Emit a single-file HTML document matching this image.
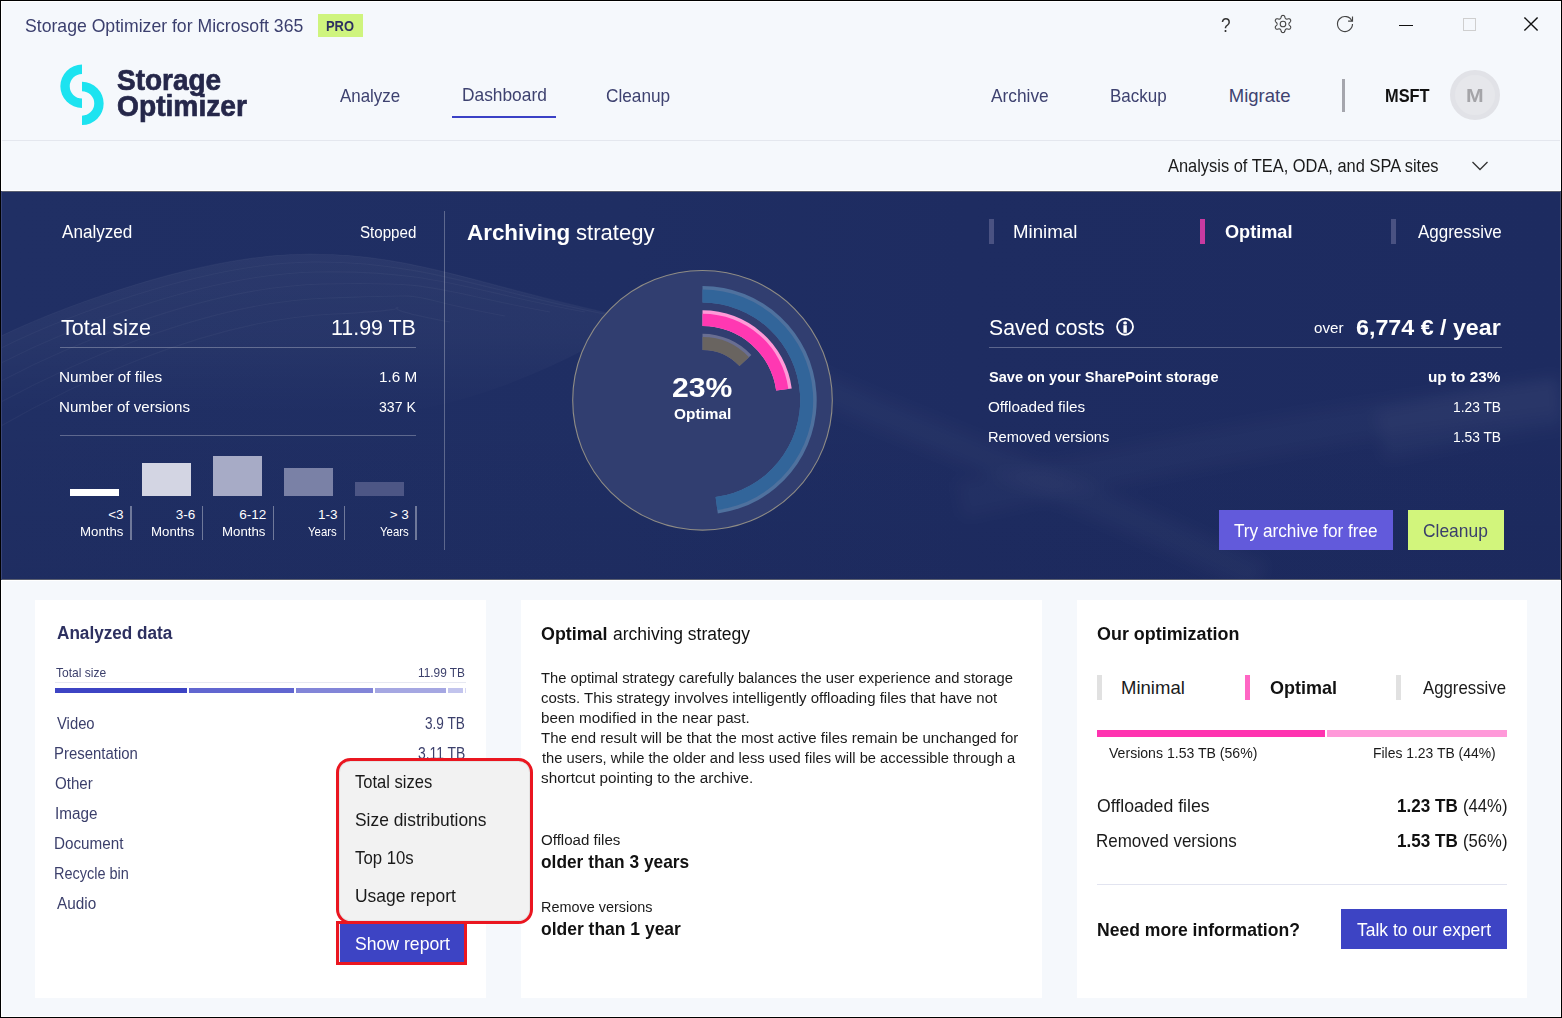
<!DOCTYPE html>
<html lang="en"><head><meta charset="utf-8"><title>Storage Optimizer for Microsoft 365</title>
<style>
*{margin:0;padding:0;}
html,body{width:1562px;height:1018px;overflow:hidden;background:#f5f8fc;}
body{font-family:"Liberation Sans",sans-serif;}
#app{position:relative;width:1562px;height:1018px;overflow:hidden;background:#f5f8fc;}
#app div,#app svg.a,#app button,.t{position:absolute;}
#app .titlebar,#app header,#app .subbar,#app section,#app nav,#app main{position:static;}
button{border:0;display:block;}
.t{white-space:nowrap;line-height:1;display:block;font-weight:400;text-decoration:none;}
.herobg{background:#1f2e63;box-sizing:border-box;border-top:1px solid #fff;border-bottom:1px solid #fff;box-shadow:inset 0 1px 0 #5a5f70,inset 0 -1px 0 #5a5f70;}
.frame{left:0;top:0;width:1562px;height:1018px;box-sizing:border-box;border:1px solid #000;box-shadow:inset 0 0 0 1px #fff;pointer-events:none;z-index:9;}
</style></head>
<body><div id="app">
<div class="titlebar"><span class="t" style="font-size:18.5px;top:17.00px;color:#3b3f6e;left:24.95px;transform:scaleX(0.9530);transform-origin:0 0;">Storage Optimizer for Microsoft 365</span><div style="left:318px;top:14px;width:45px;height:23px;background:#cff47e;"></div><span class="t" style="font-size:14px;top:19.00px;color:#2d3060;font-weight:700;left:326.19px;transform:scaleX(0.9218);transform-origin:0 0;">PRO</span><span class="t" style="font-size:19.5px;top:16.00px;color:#333;left:1220.76px;transform:scaleX(0.8821);transform-origin:0 0;">?</span><svg class="a" style="left:1273px;top:14px" width="20" height="20" viewBox="0 0 20 20"><g fill="none" stroke="#444" stroke-width="1.1" stroke-linejoin="round"><circle cx="10" cy="10" r="2.8"/><path d="M10.00 1.40L10.30 1.42L10.60 1.49L10.88 1.60L11.16 1.77L11.41 2.00L11.63 2.32L11.81 2.74L11.93 3.26L12.05 3.68L12.18 4.01L12.32 4.26L12.46 4.47L12.62 4.64L12.78 4.78L12.95 4.89L13.14 4.98L13.34 5.05L13.56 5.10L13.81 5.12L14.10 5.11L14.45 5.06L14.87 4.95L15.39 4.80L15.84 4.74L16.22 4.78L16.55 4.88L16.83 5.04L17.07 5.23L17.28 5.45L17.45 5.70L17.58 5.97L17.67 6.26L17.71 6.57L17.71 6.89L17.63 7.22L17.47 7.57L17.20 7.94L16.81 8.30L16.50 8.62L16.28 8.89L16.13 9.14L16.02 9.37L15.95 9.58L15.91 9.79L15.90 10.00L15.91 10.21L15.95 10.42L16.02 10.63L16.13 10.86L16.28 11.11L16.50 11.38L16.81 11.70L17.20 12.06L17.47 12.43L17.63 12.78L17.71 13.11L17.71 13.43L17.67 13.74L17.58 14.03L17.45 14.30L17.28 14.55L17.07 14.77L16.83 14.96L16.55 15.12L16.22 15.22L15.84 15.26L15.39 15.20L14.87 15.05L14.45 14.94L14.10 14.89L13.81 14.88L13.56 14.90L13.34 14.95L13.14 15.02L12.95 15.11L12.78 15.22L12.62 15.36L12.46 15.53L12.32 15.74L12.18 15.99L12.05 16.32L11.93 16.74L11.81 17.26L11.63 17.68L11.41 18.00L11.16 18.23L10.88 18.40L10.60 18.51L10.30 18.58L10.00 18.60L9.70 18.58L9.40 18.51L9.12 18.40L8.84 18.23L8.59 18.00L8.37 17.68L8.19 17.26L8.07 16.74L7.95 16.32L7.82 15.99L7.68 15.74L7.54 15.53L7.38 15.36L7.22 15.22L7.05 15.11L6.86 15.02L6.66 14.95L6.44 14.90L6.19 14.88L5.90 14.89L5.55 14.94L5.13 15.05L4.61 15.20L4.16 15.26L3.78 15.22L3.45 15.12L3.17 14.96L2.93 14.77L2.72 14.55L2.55 14.30L2.42 14.03L2.33 13.74L2.29 13.43L2.29 13.11L2.37 12.78L2.53 12.43L2.80 12.06L3.19 11.70L3.50 11.38L3.72 11.11L3.87 10.86L3.98 10.63L4.05 10.42L4.09 10.21L4.10 10.00L4.09 9.79L4.05 9.58L3.98 9.37L3.87 9.14L3.72 8.89L3.50 8.62L3.19 8.30L2.80 7.94L2.53 7.57L2.37 7.22L2.29 6.89L2.29 6.57L2.33 6.26L2.42 5.97L2.55 5.70L2.72 5.45L2.93 5.23L3.17 5.04L3.45 4.88L3.78 4.78L4.16 4.74L4.61 4.80L5.13 4.95L5.55 5.06L5.90 5.11L6.19 5.12L6.44 5.10L6.66 5.05L6.86 4.98L7.05 4.89L7.22 4.78L7.38 4.64L7.54 4.47L7.68 4.26L7.82 4.01L7.95 3.68L8.07 3.26L8.19 2.74L8.37 2.32L8.59 2.00L8.84 1.77L9.12 1.60L9.40 1.49L9.70 1.42Z"/></g></svg><svg class="a" style="left:1335px;top:14px" width="20" height="20" viewBox="1335 14 20 20"><g fill="none" stroke="#444" stroke-width="1.15"><path d="M1352.500 24.100A7.500 7.500 0 1 1 1351.900 21.100"/><path d="M1352.500 16.500V21.100H1348.100"/></g></svg><div style="left:1399px;top:25px;width:14px;height:1px;background:#111;"></div><div style="left:1463px;top:18px;width:13px;height:13px;background:transparent;border:1px solid #cfcfcf;box-sizing:border-box;"></div><svg class="a" style="left:1522px;top:16px" width="18" height="18" viewBox="0 0 18 18"><path d="M2.400 1.400L15.600 14.600M15.600 1.400L2.400 14.600" stroke="#111" stroke-width="1.45" fill="none"/></svg></div>
<header><svg class="a" style="left:58px;top:62px" width="50" height="66" viewBox="58 62 50 66"><path d="M82 64.600A21.650 21.650 0 0 0 82 107.900V98.500A12.250 12.250 0 0 1 82 74.000Z" fill="#1de3f0"/><path d="M82 81.800A21.650 21.650 0 0 1 82 125.100V115.700A12.250 12.250 0 0 0 82 91.200Z" fill="#1de3f0"/></svg><span class="t" style="font-size:29.5px;top:65.00px;color:#25274a;font-weight:700;left:117.16px;transform:scaleX(0.9481);transform-origin:0 0;-webkit-text-stroke:0.7px #25274a;">Storage</span><span class="t" style="font-size:29.5px;top:91.00px;color:#25274a;font-weight:700;left:117.02px;transform:scaleX(0.9554);transform-origin:0 0;-webkit-text-stroke:0.7px #25274a;">Optimizer</span><nav><a class="t" style="font-size:18.5px;top:87.00px;color:#3e4270;left:340.40px;transform:scaleX(0.9145);transform-origin:0 0;">Analyze</a><a class="t" style="font-size:18.5px;top:86.00px;color:#3e4270;left:461.65px;transform:scaleX(0.9373);transform-origin:0 0;">Dashboard</a><div style="left:452px;top:116px;width:104px;height:2px;background:#3a41c6;"></div><a class="t" style="font-size:18.5px;top:87.00px;color:#3e4270;left:606.49px;transform:scaleX(0.9317);transform-origin:0 0;">Cleanup</a><a class="t" style="font-size:18.5px;top:87.00px;color:#3e4270;left:990.50px;transform:scaleX(0.9354);transform-origin:0 0;">Archive</a><a class="t" style="font-size:18.5px;top:87.00px;color:#3e4270;left:1110.47px;transform:scaleX(0.9192);transform-origin:0 0;">Backup</a><a class="t" style="font-size:18.5px;top:87.00px;color:#3e4270;left:1228.76px;">Migrate</a></nav><div style="left:1342px;top:79px;width:3px;height:33px;background:#a5a6ad;"></div><span class="t" style="font-size:18.5px;top:87.00px;color:#111;font-weight:700;left:1384.68px;transform:scaleX(0.8847);transform-origin:0 0;">MSFT</span><div style="left:1450px;top:70px;width:50px;height:50px;background:#e6e7eb;border-radius:50%;border:5px solid #e1e2e7;box-sizing:border-box;"></div><span class="t" style="font-size:18.5px;top:87.00px;color:#a4a4a8;font-weight:700;left:1466.48px;transform:scaleX(1.1431);transform-origin:0 0;">M</span><div style="left:1px;top:140px;width:1560px;height:1px;background:#e4e7ee;"></div></header>
<div class="subbar"><span class="t" style="font-size:18.5px;top:157.00px;color:#1a1a1a;left:1168.00px;transform:scaleX(0.8878);transform-origin:0 0;">Analysis of TEA, ODA, and SPA sites</span><svg class="a" style="left:1469px;top:158px" width="22" height="14" viewBox="0 0 22 14"><path d="M3.500 4L11 11.500L18.500 4" stroke="#333" stroke-width="1.3" fill="none"/></svg></div>
<section class="hero"><div class="herobg" style="left:1px;top:190px;width:1560px;height:391px;"></div><svg class="a" style="left:1px;top:192px" width="1560" height="387" viewBox="1 192 1560 387" preserveAspectRatio="none"><defs><linearGradient id="hg" x1="0" x2="1" y1="0" y2="0"><stop offset="0" stop-color="#202f64"/><stop offset=".4" stop-color="#1f2e63"/><stop offset=".62" stop-color="#1e2c61"/><stop offset="1" stop-color="#1d2b60"/></linearGradient><linearGradient id="vg" x1="0" x2="0" y1="0" y2="1"><stop offset="0" stop-color="#000828" stop-opacity="0"/><stop offset=".55" stop-color="#000828" stop-opacity="0"/><stop offset="1" stop-color="#000828" stop-opacity=".05"/></linearGradient><linearGradient id="wf" gradientUnits="userSpaceOnUse" x1="0" x2="0" y1="256" y2="415"><stop offset="0" stop-color="#fff" stop-opacity=".05"/><stop offset=".5" stop-color="#fff" stop-opacity=".035"/><stop offset="1" stop-color="#fff" stop-opacity="0"/></linearGradient><filter id="b3" x="-5%" y="-20%" width="110%" height="140%"><feGaussianBlur stdDeviation="7"/></filter></defs><rect x="1" y="192" width="1560" height="387" fill="url(#hg)"/><rect x="1" y="192" width="1560" height="387" fill="url(#vg)"/><path d="M1 336C60 308 200 254 310 254S490 290 640 320C600 340 540 380 440 405S120 440 1 470Z" fill="url(#wf)"/><g fill="none" stroke="#fff" stroke-opacity=".035" stroke-width="1.1"><path d="M1 336C60 308 200 254 310 254S490 290 640 320"/><path d="M1 348C60 319 200 263 313 262S495 294 615 316"/><path d="M1 363C60 333 200 274 317 272S465 290 585 312"/><path d="M1 381C60 350 200 287 322 284S430 290 550 312"/><path d="M1 402C60 370 200 302 328 298S385 294 505 316"/><path d="M1 426C60 392 200 320 334 314S330 300 450 322"/></g><g filter="url(#b3)" fill="none" stroke="#fff"><path d="M640 312C720 340 790 375 860 405S1100 500 1260 578" stroke-opacity=".028" stroke-width="30"/><path d="M960 500C1100 470 1300 425 1561 395" stroke-opacity=".024" stroke-width="36"/><path d="M1380 435C1450 420 1500 410 1561 402" stroke-opacity=".03" stroke-width="50"/></g></svg><span class="t" style="font-size:18.5px;top:223.00px;color:#fff;left:61.70px;transform:scaleX(0.9245);transform-origin:0 0;">Analyzed</span><span class="t" style="font-size:16px;top:225.00px;color:#fff;left:360.33px;transform:scaleX(0.9448);transform-origin:0 0;">Stopped</span><span class="t" style="font-size:22.5px;top:317.00px;color:#fff;left:60.86px;transform:scaleX(0.9586);transform-origin:0 0;">Total size</span><span class="t" style="font-size:22.5px;top:317.00px;color:#fff;left:331.46px;transform:scaleX(0.9509);transform-origin:0 0;">11.99 TB</span><div style="left:60px;top:347px;width:356px;height:1px;background:rgba(255,255,255,.28);"></div><span class="t" style="font-size:15.5px;top:369.00px;color:#fff;left:59.30px;transform:scaleX(0.9889);transform-origin:0 0;">Number of files</span><span class="t" style="font-size:15.5px;top:369.00px;color:#fff;left:378.65px;transform:scaleX(0.9850);transform-origin:0 0;">1.6 M</span><span class="t" style="font-size:15.5px;top:399.00px;color:#fff;left:59.32px;transform:scaleX(0.9745);transform-origin:0 0;">Number of versions</span><span class="t" style="font-size:15.5px;top:399.00px;color:#fff;left:379.16px;transform:scaleX(0.9083);transform-origin:0 0;">337 K</span><div style="left:60px;top:435px;width:356px;height:1px;background:rgba(255,255,255,.28);"></div><div style="left:70px;top:489px;width:49px;height:7px;background:#ffffff;"></div><div style="left:142px;top:463px;width:49px;height:33px;background:#d3d5e3;"></div><div style="left:213px;top:456px;width:49px;height:40px;background:#a7abc6;"></div><div style="left:284px;top:468px;width:49px;height:28px;background:#7a81a6;"></div><div style="left:355px;top:482px;width:49px;height:14px;background:#4d5685;"></div><span class="t" style="font-size:13.5px;top:508.00px;color:#fff;left:108.16px;">&lt;3</span><span class="t" style="font-size:13.5px;top:525.00px;color:#fff;left:79.56px;transform:scaleX(0.9814);transform-origin:0 0;">Months</span><div style="left:130.2px;top:506px;width:1.5px;height:34px;background:rgba(255,255,255,.36);"></div><span class="t" style="font-size:13.5px;top:508.00px;color:#fff;left:175.64px;">3-6</span><span class="t" style="font-size:13.5px;top:525.00px;color:#fff;left:151.16px;transform:scaleX(0.9814);transform-origin:0 0;">Months</span><div style="left:201.7px;top:506px;width:1.5px;height:34px;background:rgba(255,255,255,.36);"></div><span class="t" style="font-size:13.5px;top:508.00px;color:#fff;left:239.33px;">6-12</span><span class="t" style="font-size:13.5px;top:525.00px;color:#fff;left:222.36px;transform:scaleX(0.9814);transform-origin:0 0;">Months</span><div style="left:272.8px;top:506px;width:1.5px;height:34px;background:rgba(255,255,255,.36);"></div><span class="t" style="font-size:13.5px;top:508.00px;color:#fff;left:318.04px;">1-3</span><span class="t" style="font-size:13.5px;top:525.00px;color:#fff;left:308.22px;transform:scaleX(0.8445);transform-origin:0 0;">Years</span><div style="left:343.8px;top:506px;width:1.5px;height:34px;background:rgba(255,255,255,.36);"></div><span class="t" style="font-size:13.5px;top:508.00px;color:#fff;left:389.70px;">&gt; 3</span><span class="t" style="font-size:13.5px;top:525.00px;color:#fff;left:379.52px;transform:scaleX(0.8445);transform-origin:0 0;">Years</span><div style="left:415px;top:506px;width:1.5px;height:34px;background:rgba(255,255,255,.36);"></div><div style="left:444px;top:211px;width:1px;height:339px;background:rgba(255,255,255,.28);"></div><span class="t" style="font-size:22.5px;top:222.00px;color:#fff;font-weight:700;left:467.15px;transform:scaleX(0.9953);transform-origin:0 0;">Archiving</span><span class="t" style="font-size:22.5px;top:222.00px;color:#fff;left:576.15px;transform:scaleX(0.9814);transform-origin:0 0;">strategy</span><svg class="a" style="left:560px;top:258px" width="284" height="284" viewBox="560 258 284 284"><circle cx="702.5" cy="400.3" r="129.8" fill="#313e70" stroke="#8f8c85" stroke-width="1.1"/><path d="M702.50 286.10A114.2 114.2 0 0 1 717.80 513.47L715.59 497.12A97.7 97.7 0 0 0 702.50 302.60Z" fill="#4f719e"/><path d="M702.50 289.60A110.7 110.7 0 0 1 717.33 510.00L715.59 497.12A97.7 97.7 0 0 0 702.50 302.60Z" fill="#32659a"/><path d="M702.50 310.30A90 90 0 0 1 791.73 388.55L776.16 390.60A74.3 74.3 0 0 0 702.50 326.00Z" fill="#ff9ad8"/><path d="M702.50 313.70A86.6 86.6 0 0 1 788.36 389.00L776.16 390.60A74.3 74.3 0 0 0 702.50 326.00Z" fill="#ff38b2"/><path d="M702.50 333.70A66.6 66.6 0 0 1 751.37 355.05L739.48 366.06A50.4 50.4 0 0 0 702.50 349.90Z" fill="#696e92"/><path d="M702.50 336.90A63.4 63.4 0 0 1 749.02 357.22L739.48 366.06A50.4 50.4 0 0 0 702.50 349.90Z" fill="#696460"/></svg><span class="t" style="font-size:28px;top:374.00px;color:#fff;font-weight:700;left:671.76px;transform:scaleX(1.0772);transform-origin:0 0;">23%</span><span class="t" style="font-size:15px;top:406.00px;color:#fff;font-weight:700;left:673.72px;transform:scaleX(1.0278);transform-origin:0 0;">Optimal</span><div style="left:989px;top:219px;width:5px;height:25px;background:#4a5282;"></div><span class="t" style="font-size:18.5px;top:223.00px;color:#fff;left:1012.94px;transform:scaleX(1.0088);transform-origin:0 0;">Minimal</span><div style="left:1200.4px;top:219px;width:5.0px;height:25px;background:#c83aa0;"></div><span class="t" style="font-size:18.5px;top:223.00px;color:#fff;font-weight:700;left:1224.83px;transform:scaleX(0.9792);transform-origin:0 0;">Optimal</span><div style="left:1391px;top:219px;width:5px;height:25px;background:#4a5282;"></div><span class="t" style="font-size:18.5px;top:223.00px;color:#fff;left:1417.60px;transform:scaleX(0.9155);transform-origin:0 0;">Aggressive</span><span class="t" style="font-size:22.5px;top:317.00px;color:#fff;left:989.14px;transform:scaleX(0.9442);transform-origin:0 0;">Saved costs</span><svg class="a" style="left:1115px;top:317px" width="20" height="20" viewBox="1115 317 20 20"><circle cx="1125.050" cy="326.750" r="8" fill="none" stroke="#fff" stroke-width="1.8"/><rect x="1123.400" y="325.200" width="3.400" height="7.600" fill="#fff"/><ellipse cx="1125.100" cy="322.900" rx="1.900" ry="1.700" fill="#fff"/></svg><span class="t" style="font-size:15.5px;top:320.00px;color:#fff;left:1313.53px;transform:scaleX(0.9800);transform-origin:0 0;">over</span><span class="t" style="font-size:22.5px;top:317.00px;color:#fff;font-weight:700;left:1356.27px;transform:scaleX(1.0331);transform-origin:0 0;">6,774 € / year</span><div style="left:989px;top:347px;width:513px;height:1px;background:rgba(255,255,255,.28);"></div><span class="t" style="font-size:15.5px;top:369.00px;color:#fff;font-weight:700;left:988.87px;transform:scaleX(0.9415);transform-origin:0 0;">Save on your SharePoint storage</span><span class="t" style="font-size:15.5px;top:369.00px;color:#fff;font-weight:700;left:1428.48px;transform:scaleX(0.9895);transform-origin:0 0;">up to 23%</span><span class="t" style="font-size:15.5px;top:399.00px;color:#fff;left:988.39px;transform:scaleX(0.9837);transform-origin:0 0;">Offloaded files</span><span class="t" style="font-size:15.5px;top:399.00px;color:#fff;left:1453.04px;transform:scaleX(0.8887);transform-origin:0 0;">1.23 TB</span><span class="t" style="font-size:15.5px;top:429.00px;color:#fff;left:987.96px;transform:scaleX(0.9450);transform-origin:0 0;">Removed versions</span><span class="t" style="font-size:15.5px;top:429.00px;color:#fff;left:1453.04px;transform:scaleX(0.8887);transform-origin:0 0;">1.53 TB</span><button style="left:1219px;top:510px;width:174px;height:40px;background:#625adb;"></button><span class="t" style="font-size:18.5px;top:522.00px;color:#fff;left:1234.23px;transform:scaleX(0.9289);transform-origin:0 0;">Try archive for free</span><button style="left:1408px;top:510px;width:96px;height:40px;background:#d2f57c;"></button><span class="t" style="font-size:18.5px;top:522.00px;color:#3a3f6b;left:1423.18px;transform:scaleX(0.9406);transform-origin:0 0;">Cleanup</span><div style="left:1px;top:191px;width:1px;height:389px;background:#3a4678;z-index:10;"></div><div style="left:1560px;top:191px;width:1px;height:389px;background:#4a5072;z-index:10;"></div></section>
<section class="card"><div style="left:35px;top:600px;width:451px;height:398px;background:#fff;"></div><h3 class="t" style="font-size:18px;top:624.00px;color:#2d3060;font-weight:700;left:56.83px;transform:scaleX(0.9531);transform-origin:0 0;">Analyzed data</h3><span class="t" style="font-size:13.5px;top:666.00px;color:#3b3f6b;left:56.31px;transform:scaleX(0.8934);transform-origin:0 0;">Total size</span><span class="t" style="font-size:13.5px;top:666.00px;color:#3b3f6b;left:418.06px;transform:scaleX(0.8783);transform-origin:0 0;">11.99 TB</span><div style="left:55px;top:682px;width:411px;height:1px;background:#e6e8f2;"></div><div style="left:55px;top:688px;width:132px;height:5px;background:#3d44c4;"></div><div style="left:189px;top:688px;width:104.5px;height:5px;background:#6166d0;"></div><div style="left:295.5px;top:688px;width:77.0px;height:5px;background:#8285d8;"></div><div style="left:374.5px;top:688px;width:71.0px;height:5px;background:#a5a7e2;"></div><div style="left:447.5px;top:688px;width:15.0px;height:5px;background:#c2c4ed;"></div><div style="left:464.5px;top:688px;width:1.5px;height:5px;background:#d5d6f3;"></div><span class="t" style="font-size:16px;top:716.00px;color:#3b3f6b;left:57.10px;transform:scaleX(0.9254);transform-origin:0 0;">Video</span><span class="t" style="font-size:16px;top:716.00px;color:#3b3f6b;left:425.27px;transform:scaleX(0.8507);transform-origin:0 0;">3.9 TB</span><span class="t" style="font-size:16px;top:746.00px;color:#3b3f6b;left:54.43px;transform:scaleX(0.9329);transform-origin:0 0;">Presentation</span><span class="t" style="font-size:16px;top:746.00px;color:#3b3f6b;left:417.77px;transform:scaleX(0.8682);transform-origin:0 0;">3.11 TB</span><span class="t" style="font-size:16px;top:776.00px;color:#3b3f6b;left:54.89px;transform:scaleX(0.9442);transform-origin:0 0;">Other</span><span class="t" style="font-size:16px;top:806.00px;color:#3b3f6b;left:55.41px;transform:scaleX(0.9537);transform-origin:0 0;">Image</span><span class="t" style="font-size:16px;top:836.00px;color:#3b3f6b;left:54.41px;transform:scaleX(0.9522);transform-origin:0 0;">Document</span><span class="t" style="font-size:16px;top:866.00px;color:#3b3f6b;left:54.47px;transform:scaleX(0.9050);transform-origin:0 0;">Recycle bin</span><span class="t" style="font-size:16px;top:896.00px;color:#3b3f6b;left:56.60px;transform:scaleX(0.9584);transform-origin:0 0;">Audio</span><div class="menu" style="left:336px;top:758px;width:197px;height:166px;background:#f2f2f2;border:3px solid #ea1620;border-radius:14.5px;box-sizing:border-box;z-index:5;box-shadow:inset 0 0 0 1px #e4e4e4;"></div><span class="t" style="font-size:18.5px;top:773.00px;color:#1a1a1a;left:355.34px;transform:scaleX(0.8947);transform-origin:0 0;z-index:6;">Total sizes</span><span class="t" style="font-size:18.5px;top:811.00px;color:#1a1a1a;left:355.06px;transform:scaleX(0.9402);transform-origin:0 0;z-index:6;">Size distributions</span><span class="t" style="font-size:18.5px;top:849.00px;color:#1a1a1a;left:355.34px;transform:scaleX(0.9057);transform-origin:0 0;z-index:6;">Top 10s</span><span class="t" style="font-size:18.5px;top:887.00px;color:#1a1a1a;left:354.51px;transform:scaleX(0.9428);transform-origin:0 0;z-index:6;">Usage report</span><button style="left:336px;top:921px;width:131px;height:44px;background:#3d44c4;border:3px solid #ea1620;box-sizing:border-box;z-index:6;box-shadow:inset 1px 0 0 #e8e8f8;"></button><span class="t" style="font-size:18.5px;top:935.00px;color:#fff;left:355.05px;transform:scaleX(0.9523);transform-origin:0 0;z-index:7;">Show report</span></section>
<section class="card"><div style="left:521px;top:600px;width:521px;height:398px;background:#fff;"></div><h3 class="t" style="font-size:18px;top:625.00px;color:#111;font-weight:700;left:541.14px;transform:scaleX(0.9926);transform-origin:0 0;">Optimal</h3><span class="t" style="font-size:18px;top:625.00px;color:#111;left:612.65px;transform:scaleX(0.9715);transform-origin:0 0;">archiving strategy</span><span class="t" style="font-size:15.5px;top:670.00px;color:#1a1a1a;left:541.47px;transform:scaleX(0.9524);transform-origin:0 0;">The optimal strategy carefully balances the user experience and storage</span><span class="t" style="font-size:15.5px;top:690.00px;color:#1a1a1a;left:541.23px;transform:scaleX(0.9673);transform-origin:0 0;">costs. This strategy involves intelligently offloading files that have not</span><span class="t" style="font-size:15.5px;top:710.00px;color:#1a1a1a;left:540.75px;transform:scaleX(0.9802);transform-origin:0 0;">been modified in the near past.</span><span class="t" style="font-size:15.5px;top:730.00px;color:#1a1a1a;left:541.47px;transform:scaleX(0.9668);transform-origin:0 0;">The end result will be that the most active files remain be unchanged for</span><span class="t" style="font-size:15.5px;top:750.00px;color:#1a1a1a;left:541.70px;transform:scaleX(0.9502);transform-origin:0 0;">the users, while the older and less used files will be accessible through a</span><span class="t" style="font-size:15.5px;top:770.00px;color:#1a1a1a;left:541.46px;transform:scaleX(0.9857);transform-origin:0 0;">shortcut pointing to the archive.</span><span class="t" style="font-size:15.5px;top:832.00px;color:#1a1a1a;left:540.99px;transform:scaleX(0.9732);transform-origin:0 0;">Offload files</span><span class="t" style="font-size:18.5px;top:853.00px;color:#111;font-weight:700;left:541.16px;transform:scaleX(0.9356);transform-origin:0 0;">older than 3 years</span><span class="t" style="font-size:15.5px;top:899.00px;color:#1a1a1a;left:540.57px;transform:scaleX(0.9310);transform-origin:0 0;">Remove versions</span><span class="t" style="font-size:18.5px;top:920.00px;color:#111;font-weight:700;left:541.15px;transform:scaleX(0.9449);transform-origin:0 0;">older than 1 year</span></section>
<section class="card"><div style="left:1077px;top:600px;width:450px;height:398px;background:#fff;"></div><h3 class="t" style="font-size:18px;top:625.00px;color:#111;font-weight:700;left:1096.54px;transform:scaleX(0.9954);transform-origin:0 0;">Our optimization</h3><div style="left:1097px;top:675.4px;width:5px;height:24.600000000000023px;background:#e1e1e1;"></div><span class="t" style="font-size:18.5px;top:679.00px;color:#1a1a1a;left:1121.05px;">Minimal</span><div style="left:1245px;top:675.4px;width:5px;height:24.600000000000023px;background:#ff66c4;"></div><span class="t" style="font-size:18.5px;top:679.00px;color:#111;font-weight:700;left:1269.84px;transform:scaleX(0.9718);transform-origin:0 0;">Optimal</span><div style="left:1396px;top:675.4px;width:5px;height:24.600000000000023px;background:#e1e1e1;"></div><span class="t" style="font-size:18.5px;top:679.00px;color:#1a1a1a;left:1423.00px;transform:scaleX(0.9067);transform-origin:0 0;">Aggressive</span><div style="left:1097px;top:730.3px;width:228px;height:7.0px;background:#ff33b0;"></div><div style="left:1327px;top:730.3px;width:180px;height:7.0px;background:#ff99d9;"></div><span class="t" style="font-size:15px;top:745.00px;color:#1a1a1a;left:1108.90px;transform:scaleX(0.9383);transform-origin:0 0;">Versions 1.53 TB (56%)</span><span class="t" style="font-size:15px;top:745.00px;color:#1a1a1a;left:1372.61px;transform:scaleX(0.9280);transform-origin:0 0;">Files 1.23 TB (44%)</span><span class="t" style="font-size:18.5px;top:797.00px;color:#1a1a1a;left:1096.87px;transform:scaleX(0.9546);transform-origin:0 0;">Offloaded files</span><span class="t" style="font-size:18.5px;top:797.00px;color:#1a1a1a;left:1463.12px;transform:scaleX(0.9006);transform-origin:0 0;">(44%)</span><span class="t" style="font-size:18.5px;top:797.00px;color:#111;font-weight:700;left:1396.63px;transform:scaleX(0.9233);transform-origin:0 0;">1.23 TB</span><span class="t" style="font-size:18.5px;top:832.00px;color:#1a1a1a;left:1096.37px;transform:scaleX(0.9181);transform-origin:0 0;">Removed versions</span><span class="t" style="font-size:18.5px;top:832.00px;color:#1a1a1a;left:1463.12px;transform:scaleX(0.9006);transform-origin:0 0;">(56%)</span><span class="t" style="font-size:18.5px;top:832.00px;color:#111;font-weight:700;left:1396.63px;transform:scaleX(0.9233);transform-origin:0 0;">1.53 TB</span><div style="left:1097px;top:884px;width:410px;height:1px;background:#e2e4f0;"></div><span class="t" style="font-size:18.5px;top:921.00px;color:#111;font-weight:700;left:1097.10px;transform:scaleX(0.9488);transform-origin:0 0;">Need more information?</span><button style="left:1341px;top:909.3px;width:166px;height:39.700000000000045px;background:#3d44c4;"></button><span class="t" style="font-size:18.5px;top:921.00px;color:#fff;left:1356.53px;transform:scaleX(0.9444);transform-origin:0 0;">Talk to our expert</span></section>
<div class="frame"></div>
</div></body></html>
